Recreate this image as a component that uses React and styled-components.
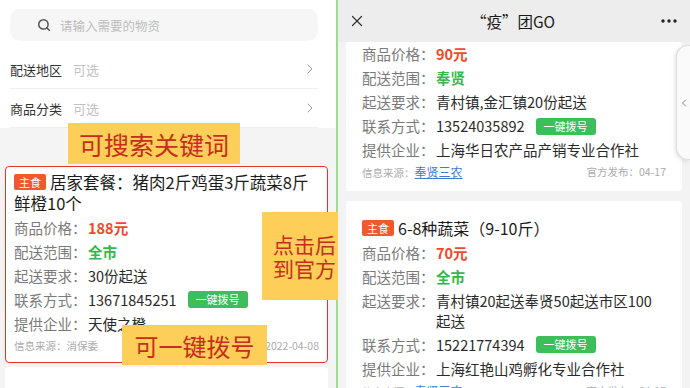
import styled, { createGlobalStyle } from "styled-components";
import { Search, ChevronRight, ChevronLeft, X } from "lucide-react";

const GlobalStyle = createGlobalStyle`
  * { box-sizing: border-box; }
  html, body { margin: 0; padding: 0; }
  body {
    font-family: "Noto Sans CJK SC", "Noto Sans", sans-serif;
    background: #fff;
    color: #222;
  }
`;

const Screen = styled.div`
  position: relative;
  display: flex;
  width: 690px;
  height: 388px;
  overflow: hidden;
`;

/* ---------- left phone ---------- */

const LeftPhone = styled.div`
  width: 336px;
  flex-shrink: 0;
  display: flex;
  flex-direction: column;
  background: #f4f4f4;
`;

const TopStrip = styled.div`
  height: 6px;
  background: linear-gradient(90deg, #fbe9da, #fdf1e6 60%, #fbeadc);
`;

const FilterPanel = styled.div`
  background: #fff;
  padding: 9px 18px 0 10px;
`;

const SearchBox = styled.div`
  height: 32px;
  border-radius: 10px;
  background: #f6f6f6;
  display: flex;
  align-items: center;
  gap: 9px;
  padding-left: 27px;
  margin-bottom: 9px;
  font-size: 12.5px;
  color: #bdbdbd;
`;

const FilterRow = styled.div`
  height: 39px;
  display: flex;
  align-items: center;
  border-bottom: 1px solid #eeeeee;
  font-size: 13px;
  color: #333;
  & > span {
    color: #c2c2c2;
    margin-left: 11px;
    flex: 1;
  }
`;

const LeftList = styled.div`
  display: flex;
  flex-direction: column;
  gap: 4px;
  padding: 38px 8px 0 5px;
`;

const Card = styled.div`
  background: #fff;
  border-radius: 4px;
  border: ${({ $marked }) => ($marked ? "1.5px solid #e8332d" : "none")};
  padding: ${({ $pad }) => $pad};
  min-height: ${({ $minH }) => $minH || 0}px;
  flex-shrink: 0;
`;

const Title = styled.div`
  font-size: ${({ $fs }) => $fs || "16px"};
  line-height: ${({ $lh }) => $lh || "21px"};
  color: #1c1c1c;
  margin-bottom: 1.5px;
`;

const Tag = styled.span`
  display: inline-block;
  background: #f2582f;
  color: #fff;
  font-size: 11px;
  line-height: 16px;
  padding: 0 5px;
  border-radius: 2px;
  margin-right: 4px;
  vertical-align: 2px;
`;

const InfoRow = styled.div`
  display: flex;
  padding: 2px 0;
  font-size: 14.5px;
  line-height: 20px;
`;

const Label = styled.div`
  width: 74px;
  flex-shrink: 0;
  color: #7a7a7a;
`;

const Value = styled.div`
  flex: 1;
  color: ${({ $tone }) =>
    $tone === "red" ? "#f2482b" : $tone === "green" ? "#36b74b" : "#2a2a2a"};
  font-weight: ${({ $tone }) => ($tone ? 700 : 400)};
  display: flex;
  align-items: center;
  flex-wrap: wrap;
`;

const DialButton = styled.span`
  display: inline-block;
  margin-left: 11px;
  background: #3cbf5a;
  color: #fff;
  font-size: 11px;
  line-height: 17px;
  height: 17px;
  padding: 0 8px;
  border-radius: 3px;
`;

const Footer = styled.div`
  display: flex;
  justify-content: space-between;
  font-size: 10.5px;
  line-height: 18px;
  color: #ababab;
  margin-top: 1px;
`;

const SourceLink = styled.span`
  color: ${({ $link }) => ($link ? "#3e7bd8" : "#ababab")};
  text-decoration: ${({ $link }) => ($link ? "underline" : "none")};
  font-size: ${({ $link }) => ($link ? "12px" : "10.5px")};
`;

/* ---------- right phone ---------- */

const RightPhone = styled.div`
  flex: 1;
  display: flex;
  flex-direction: column;
  border-left: 2px solid #a5d892;
  background: #f3f3f3;
`;

const NavBar = styled.div`
  height: 42px;
  flex-shrink: 0;
  background: #ededed;
  display: grid;
  grid-template-columns: 1fr auto 1fr;
  align-items: center;
  padding: 0 12px 0 10px;
`;

const NavTitle = styled.div`
  font-size: 15.5px;
  color: #1a1a1a;
`;

const NavMore = styled.div`
  justify-self: end;
  display: flex;
`;

const RightList = styled.div`
  display: flex;
  flex-direction: column;
  gap: 10px;
  padding: 0 8px;
`;

/* ---------- overlays ---------- */

const Note = styled.div`
  position: absolute;
  left: ${({ $x }) => $x}px;
  top: ${({ $y }) => $y}px;
  width: ${({ $w }) => $w}px;
  height: ${({ $h }) => $h}px;
  background: #fdcf58;
  color: #c62e1c;
  font-size: ${({ $fs }) => $fs}px;
  line-height: ${({ $lh }) => $lh || "normal"};
  display: flex;
  flex-direction: column;
  justify-content: center;
  align-items: ${({ $left }) => ($left ? "flex-start" : "center")};
  padding-left: ${({ $left }) => ($left ? "11px" : "0")};
  white-space: nowrap;
  overflow: hidden;
`;

const SideTab = styled.div`
  position: absolute;
  right: 0;
  top: 45px;
  width: 14px;
  height: 115px;
  background: #fafafa;
  border: 1px solid #dddddd;
  border-right: none;
  border-radius: 12px 0 0 12px;
  box-shadow: -1px 1px 4px rgba(0, 0, 0, 0.12);
  display: flex;
  align-items: center;
  justify-content: center;
  color: #888;
`;

const Dots = () => (
  <svg width="18" height="6" viewBox="0 0 18 6">
    <circle cx="3" cy="3" r="1.7" fill="#222" />
    <circle cx="9" cy="3" r="1.7" fill="#222" />
    <circle cx="15" cy="3" r="1.7" fill="#222" />
  </svg>
);

const Row = ({ label, tone, children }) => (
  <InfoRow>
    <Label>{label}</Label>
    <Value $tone={tone}>{children}</Value>
  </InfoRow>
);

export default function App() {
  return (
    <>
      <GlobalStyle />
      <Screen>
        <LeftPhone>
          <TopStrip />
          <FilterPanel>
            <SearchBox>
              <Search size={14} strokeWidth={2.6} color="#555" />
              请输入需要的物资
            </SearchBox>
            <FilterRow>
              配送地区<span>可选</span>
              <ChevronRight size={16} strokeWidth={1.5} color="#9a9a9a" />
            </FilterRow>
            <FilterRow>
              商品分类<span>可选</span>
              <ChevronRight size={16} strokeWidth={1.5} color="#9a9a9a" />
            </FilterRow>
          </FilterPanel>
          <LeftList>
            <Card $marked $pad="5px 8px 7px 8px">
              <Title $fs="16.5px">
                <Tag>主食</Tag>居家套餐：猪肉2斤鸡蛋3斤蔬菜8斤鲜橙10个
              </Title>
              <Row label="商品价格：" tone="red">188元</Row>
              <Row label="配送范围：" tone="green">全市</Row>
              <Row label="起送要求：">30份起送</Row>
              <Row label="联系方式：">
                13671845251<DialButton>一键拨号</DialButton>
              </Row>
              <Row label="提供企业：">天使之橙</Row>
              <Footer>
                <span>
                  信息来源：<SourceLink>消保委</SourceLink>
                </span>
                <span>官方发布：2022-04-08</span>
              </Footer>
            </Card>
            <Card $minH={40} />
          </LeftList>
        </LeftPhone>

        <RightPhone>
          <NavBar>
            <X size={18} strokeWidth={1.6} color="#333" />
            <NavTitle>“疫”团GO</NavTitle>
            <NavMore>
              <Dots />
            </NavMore>
          </NavBar>
          <RightList>
            <Card $pad="0 16px 9px 16px">
              <Row label="商品价格：" tone="red">90元</Row>
              <Row label="配送范围：" tone="green">奉贤</Row>
              <Row label="起送要求：">青村镇,金汇镇20份起送</Row>
              <Row label="联系方式：">
                13524035892<DialButton>一键拨号</DialButton>
              </Row>
              <Row label="提供企业：">上海华日农产品产销专业合作社</Row>
              <Footer>
                <span>
                  信息来源：<SourceLink $link>奉贤三农</SourceLink>
                </span>
                <span>官方发布：04-17</span>
              </Footer>
            </Card>
            <Card $pad="16px 16px 9px 16px">
              <Title $lh="22px">
                <Tag>主食</Tag>6-8种蔬菜（9-10斤）
              </Title>
              <Row label="商品价格：" tone="red">70元</Row>
              <Row label="配送范围：" tone="green">全市</Row>
              <Row label="起送要求：">青村镇20起送奉贤50起送市区100起送</Row>
              <Row label="联系方式：">
                15221774394<DialButton>一键拨号</DialButton>
              </Row>
              <Row label="提供企业：">上海红艳山鸡孵化专业合作社</Row>
              <Footer>
                <span>
                  信息来源：<SourceLink $link>奉贤三农</SourceLink>
                </span>
                <span>官方发布：04-17</span>
              </Footer>
            </Card>
          </RightList>
        </RightPhone>

        <SideTab>
          <ChevronLeft size={12} strokeWidth={2} />
        </SideTab>

        <Note $x={68} $y={123} $w={172} $h={41} $fs={25}>
          可搜索关键词
        </Note>
        <Note $x={262} $y={212} $w={76} $h={88} $fs={21} $lh="24px" $left>
          <span>点击后</span>
          <span>到官方</span>
        </Note>
        <Note $x={122} $y={325} $w={145} $h={40} $fs={24}>
          可一键拨号
        </Note>
      </Screen>
    </>
  );
}
